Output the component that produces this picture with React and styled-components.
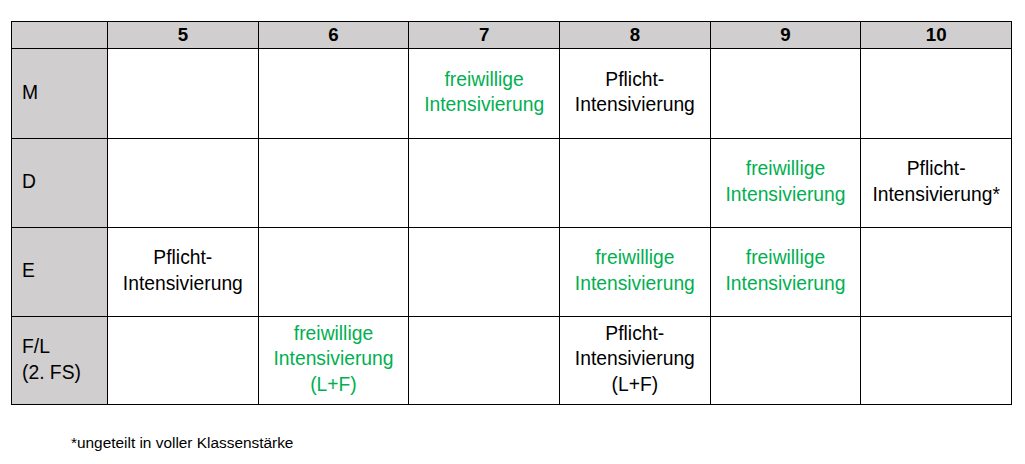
import React from "react"
import styled, { createGlobalStyle } from "styled-components"

const GlobalStyle = createGlobalStyle`
  html, body {
    margin: 0;
    padding: 0;
    background: #fff;
  }
  body {
    font-family: "Liberation Sans", Arial, sans-serif;
    color: #000;
  }
`

const Page = styled.div`
  width: 1025px;
  height: 464px;
  padding: 21px 0 0 11px;
  box-sizing: border-box;
`

const Grid = styled.div`
  display: grid;
  grid-template-columns: 96px repeat(6, 1fr);
  grid-template-rows: 27px 90px 89px 89px 88px;
  width: 1001px;
  box-sizing: border-box;
  border-top: 1.5px solid #000;
  border-left: 1.5px solid #000;
`

const Cell = styled.div`
  box-sizing: border-box;
  border-right: 1.5px solid #000;
  border-bottom: 1.5px solid #000;
  background: ${p => (p.$head ? "#d0cece" : "#fff")};
  display: flex;
  flex-direction: column;
  justify-content: center;
  align-items: ${p => (p.$label ? "flex-start" : "center")};
  padding: ${p => (p.$label ? "0 0 2px 10px" : "0 0 3px")};
  text-align: ${p => (p.$label ? "left" : "center")};
  font-size: 19.3px;
  line-height: 25.5px;
  font-weight: ${p => (p.$bold ? 700 : 400)};
  color: ${p => (p.$green ? "#00b050" : "#000")};
`

const HeadCell = styled(Cell)`
  padding: 0;
  font-size: 18.7px;
  line-height: 24px;
`

const Footnote = styled.div`
  margin: 29px 0 0 60px;
  font-size: 15.4px;
  line-height: 18px;
`

const years = [5, 6, 7, 8, 9, 10]

const F = { text: ["freiwillige", "Intensivierung"], green: true }
const P = { text: ["Pflicht-", "Intensivierung"] }

const rows = [
  { label: ["M"], cells: [null, null, F, P, null, null] },
  {
    label: ["D"],
    cells: [null, null, null, null, F, { text: ["Pflicht-", "Intensivierung*"] }],
  },
  { label: ["E"], cells: [P, null, null, F, F, null] },
  {
    label: ["F/L", "(2. FS)"],
    cells: [
      null,
      { text: ["freiwillige", "Intensivierung", "(L+F)"], green: true },
      null,
      { text: ["Pflicht-", "Intensivierung", "(L+F)"] },
      null,
      null,
    ],
  },
]

const Lines = ({ lines }) => lines.map((l, i) => <span key={i}>{l}</span>)

export default function App() {
  return (
    <Page>
      <GlobalStyle />
      <Grid>
        <HeadCell $head />
        {years.map(y => (
          <HeadCell key={y} $head $bold>
            {y}
          </HeadCell>
        ))}
        {rows.map((row, r) => (
          <React.Fragment key={r}>
            <Cell $head $label>
              <Lines lines={row.label} />
            </Cell>
            {row.cells.map((c, i) => (
              <Cell key={i} $green={c && c.green}>
                {c && <Lines lines={c.text} />}
              </Cell>
            ))}
          </React.Fragment>
        ))}
      </Grid>
      <Footnote>*ungeteilt in voller Klassenstärke</Footnote>
    </Page>
  )
}
